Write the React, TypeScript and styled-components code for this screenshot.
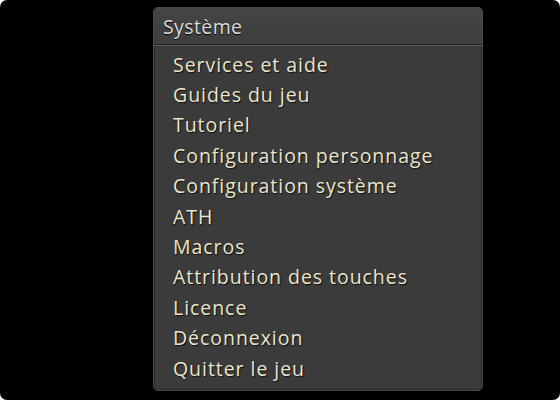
import React from "react";
import styled, { createGlobalStyle } from "styled-components";

const Global = createGlobalStyle`
  html, body { margin: 0; padding: 0; background: #ffffff; }
  #root { width: 560px; height: 400px; }
`;

const Screen = styled.div`
  width: 560px;
  height: 400px;
  background: #000;
  border-radius: 7px;
  display: flex;
  justify-content: flex-start;
  align-items: flex-start;
  padding: 7px 0 0 153px;
  box-sizing: border-box;
`;

const Panel = styled.div`
  width: 330px;
  height: 384px;
  box-sizing: border-box;
  background: #3b3b3b;
  border-radius: 5px;
  border: 1px solid #4a4a4a;
  box-shadow: inset 0 0 0 1px #2a2a2a;
  display: flex;
  flex-direction: column;
  overflow: hidden;
  font-family: "Open Sans", "Noto Sans", sans-serif;
`;

const Header = styled.div`
  height: 36px;
  display: flex;
  align-items: center;
  padding-left: 9px;
  background: linear-gradient(#454545, #3e3e3e);
  border-bottom: 1px solid #222;
  box-shadow: 0 1px 0 #5a5a5a;
  color: #dcdcdc;
  font-size: 19.5px;
  letter-spacing: 0.4px;
  text-shadow: 0 1px 1px #000;
`;

const List = styled.ul`
  list-style: none;
  margin: 0;
  padding: 4px 0 0 19px;
  display: flex;
  flex-direction: column;
`;

const Item = styled.li`
  height: 30.4px;
  display: flex;
  align-items: center;
  color: #ebe5cc;
  font-size: 19.5px;
  letter-spacing: 0.95px;
  text-shadow: 1px 1px 1px #111;
`;

const items = [
  "Services et aide",
  "Guides du jeu",
  "Tutoriel",
  "Configuration personnage",
  "Configuration système",
  "ATH",
  "Macros",
  "Attribution des touches",
  "Licence",
  "Déconnexion",
  "Quitter le jeu",
];

export default function App() {
  return (
    <>
      <Global />
      <Screen>
        <Panel>
          <Header>Système</Header>
          <List>
            {items.map((t) => (
              <Item key={t}>{t}</Item>
            ))}
          </List>
        </Panel>
      </Screen>
    </>
  );
}
